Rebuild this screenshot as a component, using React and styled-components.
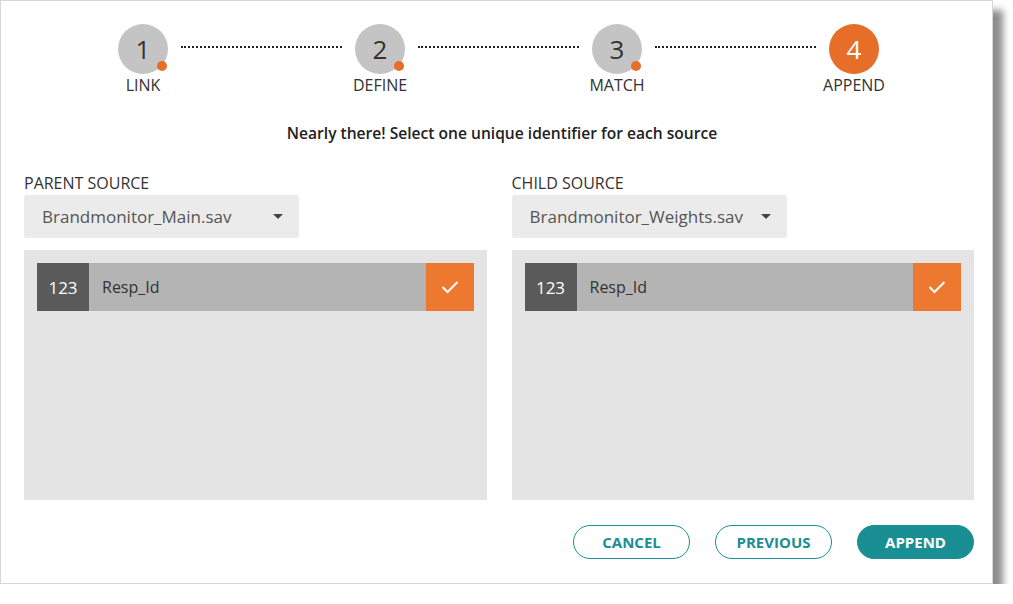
import React from "react";
import styled, { createGlobalStyle } from "styled-components";

const GlobalStyle = createGlobalStyle`
  body {
    margin: 0;
    background: #ffffff;
    font-family: "Open Sans", "Noto Sans", sans-serif;
  }
`;

const Dialog = styled.div`
  box-sizing: border-box;
  width: 993px;
  height: 584px;
  background: #ffffff;
  border: 1px solid #d6d6d6;
  box-shadow: 10px 10px 7px rgba(0, 0, 0, 0.45);
  padding: 23px 18px 0 23px;
  display: flex;
  flex-direction: column;
`;

const Stepper = styled.div`
  display: flex;
  align-items: flex-start;
  padding: 0 82px 0 81px;
`;

const Step = styled.div`
  width: 76px;
  display: flex;
  flex-direction: column;
  align-items: center;
`;

const Circle = styled.div`
  position: relative;
  width: 50px;
  height: 50px;
  border-radius: 50%;
  background: ${(p) => (p.active ? "#e66e29" : "#c4c4c4")};
  color: ${(p) => (p.active ? "#ffffff" : "#333333")};
  font-size: 26px;
  font-weight: 400;
  display: flex;
  align-items: center;
  justify-content: center;
`;

const Dot = styled.span`
  position: absolute;
  right: 1px;
  bottom: 3px;
  width: 10px;
  height: 10px;
  border-radius: 50%;
  background: #e66e29;
`;

const StepLabel = styled.div`
  margin-top: 1px;
  font-size: 16px;
  line-height: 20px;
  color: #333333;
  white-space: nowrap;
`;

const Connector = styled.div`
  flex: 1;
  margin-top: 22px;
  border-top: 2px dotted #222222;
`;

const Heading = styled.div`
  margin-top: 28px;
  text-align: center;
  font-size: 15.6px;
  font-weight: 600;
  line-height: 20px;
  color: #222222;
  padding-left: 6px;
`;

const Columns = styled.div`
  margin-top: 30px;
  display: flex;
  gap: 25px;
`;

const Column = styled.div`
  flex: 1;
  display: flex;
  flex-direction: column;
  align-items: flex-start;
`;

const SourceLabel = styled.div`
  font-size: 16px;
  line-height: 20px;
  color: #333333;
`;

const Select = styled.div`
  box-sizing: border-box;
  margin-top: 2px;
  width: 275px;
  height: 43px;
  background: #ebebeb;
  border-radius: 3px;
  padding: 0 16px 0 18px;
  display: flex;
  align-items: center;
  justify-content: space-between;
  font-size: 17px;
  color: #555555;
`;

const Caret = styled.span`
  width: 0;
  height: 0;
  border-left: 5px solid transparent;
  border-right: 5px solid transparent;
  border-top: 5px solid #444444;
`;

const Panel = styled.div`
  box-sizing: border-box;
  align-self: stretch;
  margin-top: 12px;
  height: 250px;
  background: #e4e4e4;
  padding: 13px 13px;
`;

const FieldRow = styled.div`
  display: flex;
  height: 48px;
  background: #b4b4b4;
`;

const TypeTag = styled.div`
  width: 52px;
  background: #5a5a5a;
  color: #ffffff;
  font-size: 17px;
  display: flex;
  align-items: center;
  justify-content: center;
`;

const FieldName = styled.div`
  flex: 1;
  padding-left: 13px;
  display: flex;
  align-items: center;
  font-size: 16px;
  color: #333333;
`;

const CheckBox = styled.div`
  width: 48px;
  background: #ec792f;
  display: flex;
  align-items: center;
  justify-content: center;
`;

const Footer = styled.div`
  margin-top: 25px;
  display: flex;
  justify-content: flex-end;
  gap: 25px;
`;

const Button = styled.button`
  box-sizing: border-box;
  width: 117px;
  height: 34px;
  border-radius: 17px;
  border: 1px solid #1a8f93;
  background: ${(p) => (p.primary ? "#1a8f93" : "#ffffff")};
  color: ${(p) => (p.primary ? "#ffffff" : "#1a8f93")};
  font-family: "Open Sans", "Noto Sans", sans-serif;
  font-size: 15px;
  font-weight: 700;
  cursor: pointer;
`;

const steps = [
  { n: 1, label: "LINK" },
  { n: 2, label: "DEFINE" },
  { n: 3, label: "MATCH" },
  { n: 4, label: "APPEND", active: true },
];

const sources = [
  { label: "PARENT SOURCE", file: "Brandmonitor_Main.sav" },
  { label: "CHILD SOURCE", file: "Brandmonitor_Weights.sav" },
];

const Check = () => (
  <svg width="18" height="14" viewBox="0 0 18 14">
    <polyline points="1.5,7 6.5,12 16.5,2" fill="none" stroke="#ffffff" strokeWidth="2" />
  </svg>
);

export default function App() {
  return (
    <>
      <GlobalStyle />
      <Dialog>
        <Stepper>
          {steps.map((s, i) => (
            <React.Fragment key={s.n}>
              {i > 0 && <Connector />}
              <Step>
                <Circle active={s.active}>
                  {s.n}
                  {!s.active && <Dot />}
                </Circle>
                <StepLabel>{s.label}</StepLabel>
              </Step>
            </React.Fragment>
          ))}
        </Stepper>
        <Heading>Nearly there! Select one unique identifier for each source</Heading>
        <Columns>
          {sources.map((src) => (
            <Column key={src.label}>
              <SourceLabel>{src.label}</SourceLabel>
              <Select>
                {src.file}
                <Caret />
              </Select>
              <Panel>
                <FieldRow>
                  <TypeTag>123</TypeTag>
                  <FieldName>Resp_Id</FieldName>
                  <CheckBox>
                    <Check />
                  </CheckBox>
                </FieldRow>
              </Panel>
            </Column>
          ))}
        </Columns>
        <Footer>
          <Button>CANCEL</Button>
          <Button>PREVIOUS</Button>
          <Button primary>APPEND</Button>
        </Footer>
      </Dialog>
    </>
  );
}
